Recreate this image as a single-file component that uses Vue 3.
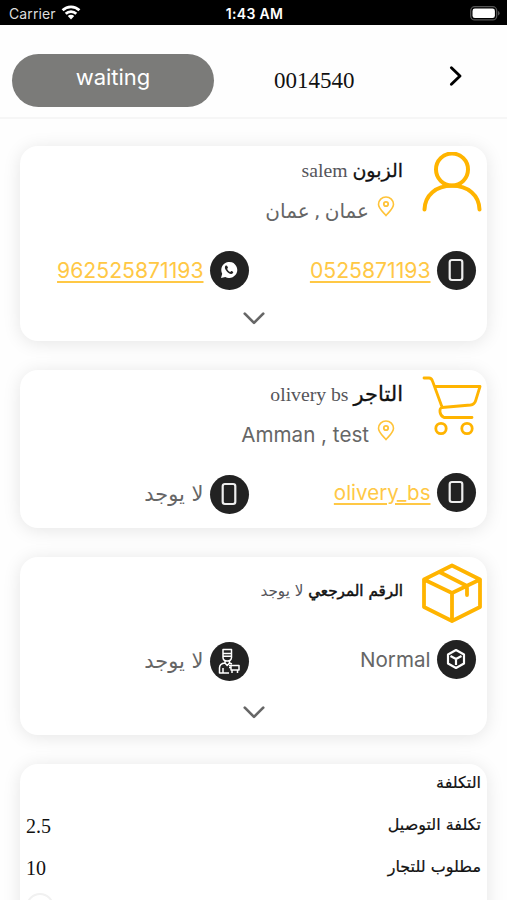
<script setup>
const costs = [
  { label: 'تكلفة التوصيل', value: '2.5' },
  { label: 'مطلوب للتجار', value: '10' },
]
</script>

<template>
  <div class="screen">
    <div class="status">
      <div class="carrier">
        <span>Carrier</span>
        <svg width="20" height="15" viewBox="0 0 20 15" fill="none" stroke="#fff" stroke-width="2.7">
          <path d="M1.600 5.300a12 12 0 0 1 16.800 0M4.700 8.800a7.600 7.600 0 0 1 10.600 0" />
          <path d="M6.800 11a4.600 4.600 0 0 1 6.400 0L10 14.400z" fill="#fff" stroke="none" />
        </svg>
      </div>
      <span class="clock">1:43 AM</span>
      <svg class="battery" width="30" height="15" viewBox="0 0 30 15">
        <rect x=".7" y=".7" width="26" height="13.200" rx="4" fill="none" stroke="#555" stroke-width="1.300" />
        <rect x="2.500" y="2.500" width="22.400" height="9.600" rx="2.400" fill="#fff" />
        <path d="M28 5v4.600q1.600-.6 1.600-2.300T28 5" fill="#555" />
      </svg>
    </div>

    <header class="top">
      <div class="pill"><span>waiting</span></div>
      <span class="order">0014540</span>
      <svg class="next" width="16" height="22" viewBox="0 0 16 22" fill="none" stroke="#000" stroke-width="2.900" stroke-linecap="round" stroke-linejoin="round"><path d="M3.400 2.800 12 11l-8.600 8.200" /></svg>
    </header>

    <main dir="rtl">
      <section class="card customer">
        <div class="head">
          <svg class="big" viewBox="0 0 60 60" fill="none" stroke="#ffb400" stroke-width="4" stroke-linecap="round"><circle cx="30" cy="17.500" r="16" /><path d="M2.500 57.500C3 43 14 33.800 30 33.800S57 43 57.500 57.500" /></svg>
          <div class="lines">
            <div class="name"><b>الزبون</b> <span>salem</span></div>
            <div class="place">
              <svg class="pin" viewBox="0 0 18 21" fill="none" stroke="#ffc338" stroke-width="1.600"><path d="M9 19.500C6 16 1.500 12.500 1.500 8.300a7.500 7.300 0 0 1 15 0C16.500 12.500 12 16 9 19.500z" /><circle cx="9" cy="8" r="2.200" stroke-width="1.800" /></svg>
              <span class="ar city">عمان , عمان</span>
            </div>
          </div>
        </div>
        <div class="contacts">
          <div class="contact">
            <span class="dot"><svg width="16" height="24" viewBox="0 0 16 24"><rect x="1.700" y="2" width="12.600" height="20" rx="2.200" fill="none" stroke="#eee" stroke-width="2.200" /></svg></span>
            <a class="phone">0525871193</a>
          </div>
          <div class="contact">
            <span class="dot"><svg width="18" height="18" viewBox="0 0 18 18"><path d="M1 17l1.200-4.300A8 8 0 1 1 5.300 15.900z" fill="#fff" /><path d="M5.700 4.600c-1.600 1.700-.8 3.800 1.200 6s4.600 3.200 6.100 1.400c.6-.8.1-1.300-1.300-1.900-.9-.3-.9.900-1.600.800C8.900 10.400 7.500 9 7.200 7.900c-.1-.6 1-.7.700-1.500-.6-1.700-1.100-2.400-2.200-1.800z" fill="#222" /></svg></span>
            <a class="phone">962525871193</a>
          </div>
        </div>
        <svg class="more" viewBox="0 0 20 12"><path d="M1.500 1.500 10 10l8.500-8.500" /></svg>
      </section>

      <section class="card merchant">
        <div class="head">
          <svg class="big" viewBox="0 0 60 60" fill="none" stroke="#ffb400" stroke-width="2.800" stroke-linecap="round" stroke-linejoin="round"><path d="M2 2h5q2.500 0 3.500 3l9.500 26M13 10.500h45l-4.300 14q-1.200 4-5.200 4.500L20 31.500q-2.500.5-2 4.500t4 5.500h28" /><circle cx="19" cy="52.500" r="5.200" /><circle cx="45" cy="52.500" r="5.200" /></svg>
          <div class="lines">
            <div class="name"><b>التاجر</b> <span>olivery bs</span></div>
            <div class="place">
              <svg class="pin" viewBox="0 0 18 21" fill="none" stroke="#ffc338" stroke-width="1.600"><path d="M9 19.500C6 16 1.500 12.500 1.500 8.300a7.500 7.300 0 0 1 15 0C16.500 12.500 12 16 9 19.500z" /><circle cx="9" cy="8" r="2.200" stroke-width="1.800" /></svg>
              <span class="latin" dir="ltr">Amman , test</span>
            </div>
          </div>
        </div>
        <div class="contacts">
          <div class="contact">
            <span class="dot"><svg width="16" height="24" viewBox="0 0 16 24"><rect x="1.700" y="2" width="12.600" height="20" rx="2.200" fill="none" stroke="#eee" stroke-width="2.200" /></svg></span>
            <a class="handle">olivery_bs</a>
          </div>
          <div class="contact low">
            <span class="dot"><svg width="16" height="24" viewBox="0 0 16 24"><rect x="1.700" y="2" width="12.600" height="20" rx="2.200" fill="none" stroke="#eee" stroke-width="2.200" /></svg></span>
            <span class="ar">لا يوجد</span>
          </div>
        </div>
      </section>

      <section class="card parcel">
        <div class="head">
          <svg class="big" viewBox="0 0 60 60" fill="none" stroke="#ffb400" stroke-width="3.800" stroke-linecap="round" stroke-linejoin="round"><path d="M30 2.500 58 16.500V44L30 58 2 44V16.500zM2 16.500l28 13.500 28-13.500M30 30v28M17.500 9 45 23v9" /></svg>
          <div class="lines">
            <div class="ref"><b>الرقم المرجعي</b> <span>لا يوجد</span></div>
          </div>
        </div>
        <div class="contacts">
          <div class="contact">
            <span class="dot"><svg width="20" height="22" viewBox="0 0 20 22" fill="none" stroke="#fff" stroke-width="2.200" stroke-linejoin="round"><path d="M10 2 18 6.500v9L10 20l-8-4.500v-9zM4.500 8 10 11l5.500-3M10 11v6" /></svg></span>
            <span class="latin">Normal</span>
          </div>
          <div class="contact low">
            <span class="dot"><svg width="22" height="26" viewBox="0 0 22 26" fill="none" stroke="#fff" stroke-width="1.500" stroke-linejoin="round"><path d="M5 1.500h8.500v4H5zM5 5.500v4q0 3.500 4.200 3.500t4.300-3.500v-4M5 8.300h8.500M7 13v2l2.200 2.500 2.300-2.500v-2M7 15q-5.500.5-5.500 5v5H11M5 20v5M11.500 15l2.500 1" /><path d="M11 17.500h2v2h-2M13 17.500h8v4.500h-8zM14 22v3M19.500 22v3" /></svg></span>
            <span class="ar">لا يوجد</span>
          </div>
        </div>
        <svg class="more" viewBox="0 0 20 12"><path d="M1.500 1.500 10 10l8.500-8.500" /></svg>
      </section>

      <section class="card cost">
        <div class="row"><span>التكلفة</span></div>
        <div v-for="item in costs" :key="item.label" class="row">
          <span>{{ item.label }}</span><span class="num">{{ item.value }}</span>
        </div>
        <div class="row last"><span>طريقة الدفع عند الاستلام</span><i class="toggle"></i></div>
      </section>
    </main>
  </div>
</template>

<style>
body { background: #fff; overflow: hidden; }
</style>

<style scoped>
.screen { width: 507px; height: 900px; overflow: hidden; background: #fefefe; font-family: Inter, "DejaVu Sans", sans-serif; }
.screen * { box-sizing: border-box; }
svg { display: block; flex: none; }
.status { height: 25px; background: #000; color: #fff; display: grid; grid-template-columns: 1fr auto 1fr; align-items: center; padding: 2px 7px 0 9px; font-size: 14px; }
.carrier { display: flex; align-items: center; gap: 6px; color: #ddd; letter-spacing: .1px; }
.carrier svg { margin: -2px 0 0 -1px; }
.clock { font-weight: 600; font-size: 14px; letter-spacing: .35px; }
.battery { justify-self: end; }
.top { height: 94px; border-bottom: 2px solid #f6f6f6; display: flex; padding: 29px 43px 0 12px; }
.pill { width: 202px; height: 53px; border-radius: 27px; background: #7b7b79; color: #fff; display: flex; justify-content: center; font-size: 22px; line-height: 46px; }
.order { width: 82px; margin-left: 60px; font: 23px/53px "Liberation Serif", serif; color: #111; }
.next { margin: 11px 0 0 auto; }
main { padding: 27px 20px 0; }
.card { background: #fff; border-radius: 18px; box-shadow: 0 2px 18px rgba(0, 0, 0, .1); margin-bottom: 29px; }
.customer { height: 195px; }
.merchant { height: 158px; }
.parcel { height: 178px; }
.head { height: 97px; display: flex; padding: 6px 5px 0 0; gap: 19px; }
.customer .head { height: 99px; }
.parcel .head { height: 77px; }
.big { width: 60px; height: 60px; }
.lines { display: flex; flex-direction: column; }
.name { height: 36px; line-height: 36px; font-family: "Liberation Serif", "DejaVu Sans", serif; font-size: 19.700px; color: #55555a; white-space: nowrap; }
.name b { font: 19px "DejaVu Sans", sans-serif; color: #111; -webkit-text-stroke: .3px #111; }
.merchant .name b { font-size: 21px; }
.place { display: flex; gap: 8px; padding: 8px 8px 0 0; color: #666; line-height: 30px; white-space: nowrap; }
.merchant .place { padding-top: 7.500px; }
.pin { width: 18px; height: 21px; }
.ar { font-family: "DejaVu Sans", sans-serif; font-size: 21px; color: #666; }
.city { font-size: 20px; word-spacing: -2px; }
.latin { font-size: 20.600px; color: #666; }
.contacts { display: grid; grid-template-columns: 227px 1fr; padding-right: 11.500px; }
.contact { display: flex; align-items: center; gap: 6px; height: 50px; }
.low { padding-top: 4px; }
.dot { width: 39px; height: 39px; border-radius: 50%; background: #222; display: grid; place-items: center; flex: none; }
a { color: #ffc845; text-decoration: underline; text-decoration-thickness: 1.500px; text-underline-offset: 3px; font-size: 21.200px; }
.handle { font-size: 20.500px; }
.more { width: 22px; height: 13px; margin: 17px auto 0; fill: none; stroke: #666; stroke-width: 2.500; stroke-linecap: round; stroke-linejoin: round; }
.parcel .more { margin-top: 22px; }
.ref { padding-top: 14px; font: 15.200px/28px "DejaVu Sans", sans-serif; color: #55555a; white-space: nowrap; }
.ref b { font-weight: 400; color: #111; -webkit-text-stroke: .5px #111; }
.cost { height: 180px; padding: 1px 6px 0; }
.row { height: 42px; display: flex; justify-content: space-between; font: 16px/36px "DejaVu Sans", sans-serif; color: #111; -webkit-text-stroke: .2px #111; }
.num { font: 20px/38px "Liberation Serif", serif; -webkit-text-stroke: 0; }
.last { margin-top: -2px; }
.toggle { width: 28px; height: 28px; border: 2px solid #f1f1f1; border-radius: 50%; margin: 4px 0; }
</style>
